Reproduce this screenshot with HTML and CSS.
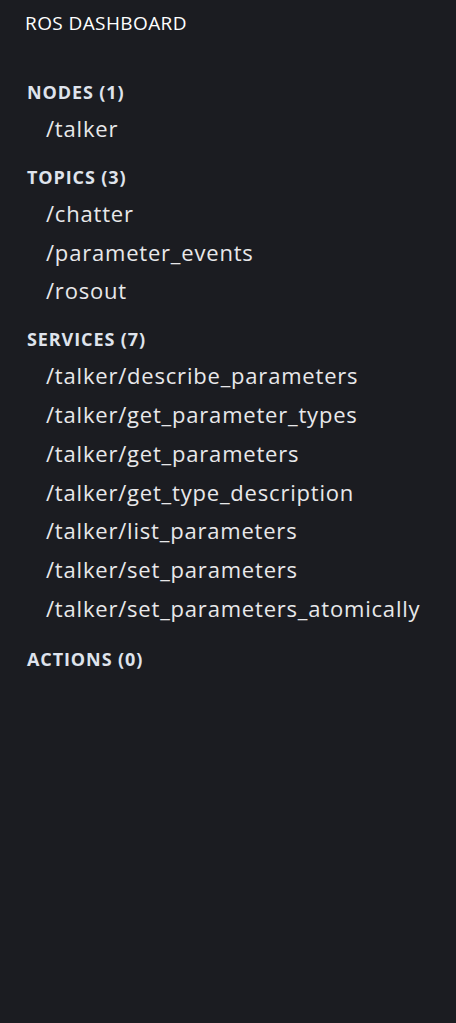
FILE: index.html
```html
<!DOCTYPE html>
<html lang="en">
<head>
<meta charset="utf-8">
<title>ROS Dashboard</title>
<link rel="stylesheet" href="styles.css">
</head>
<body>
<div class="app">
  <header class="title">ROS DASHBOARD</header>
  <section class="group">
    <h2 class="group-head">NODES (1)</h2>
    <ul class="items">
      <li>/talker</li>
    </ul>
  </section>
  <section class="group">
    <h2 class="group-head">TOPICS (3)</h2>
    <ul class="items">
      <li>/chatter</li>
      <li>/parameter_events</li>
      <li>/rosout</li>
    </ul>
  </section>
  <section class="group">
    <h2 class="group-head">SERVICES (7)</h2>
    <ul class="items">
      <li>/talker/describe_parameters</li>
      <li>/talker/get_parameter_types</li>
      <li>/talker/get_parameters</li>
      <li>/talker/get_type_description</li>
      <li>/talker/list_parameters</li>
      <li>/talker/set_parameters</li>
      <li>/talker/set_parameters_atomically</li>
    </ul>
  </section>
  <section class="group group-last">
    <h2 class="group-head">ACTIONS (0)</h2>
  </section>
</div>
</body>
</html>
```
FILE: styles.css
```css
html, body {
  margin: 0;
  padding: 0;
  background: #1b1c21;
  height: 100%;
}
body {
  font-family: "Open Sans", "Noto Sans", sans-serif;
  color: #e4e6ea;
}
.app {
  padding: 11px 0 0 25px;
}
.title {
  font-size: 19px;
  line-height: 24px;
  color: #ffffff;
  letter-spacing: 0.4px;
  margin-bottom: 45px;
}
.group {
  margin-top: 17px;
}
.group-last {
  margin-top: 19px;
}
.group-head {
  margin: 0 0 5px 2px;
  font-size: 18px;
  font-weight: 700;
  line-height: 24px;
  color: #dfe3ec;
  letter-spacing: 0.9px;
}
.items {
  list-style: none;
  margin: 0;
  padding: 0 0 0 21px;
}
.items li {
  font-size: 22px;
  line-height: 38.8px;
  color: #e8e8ea;
  letter-spacing: 0.8px;
}
```
